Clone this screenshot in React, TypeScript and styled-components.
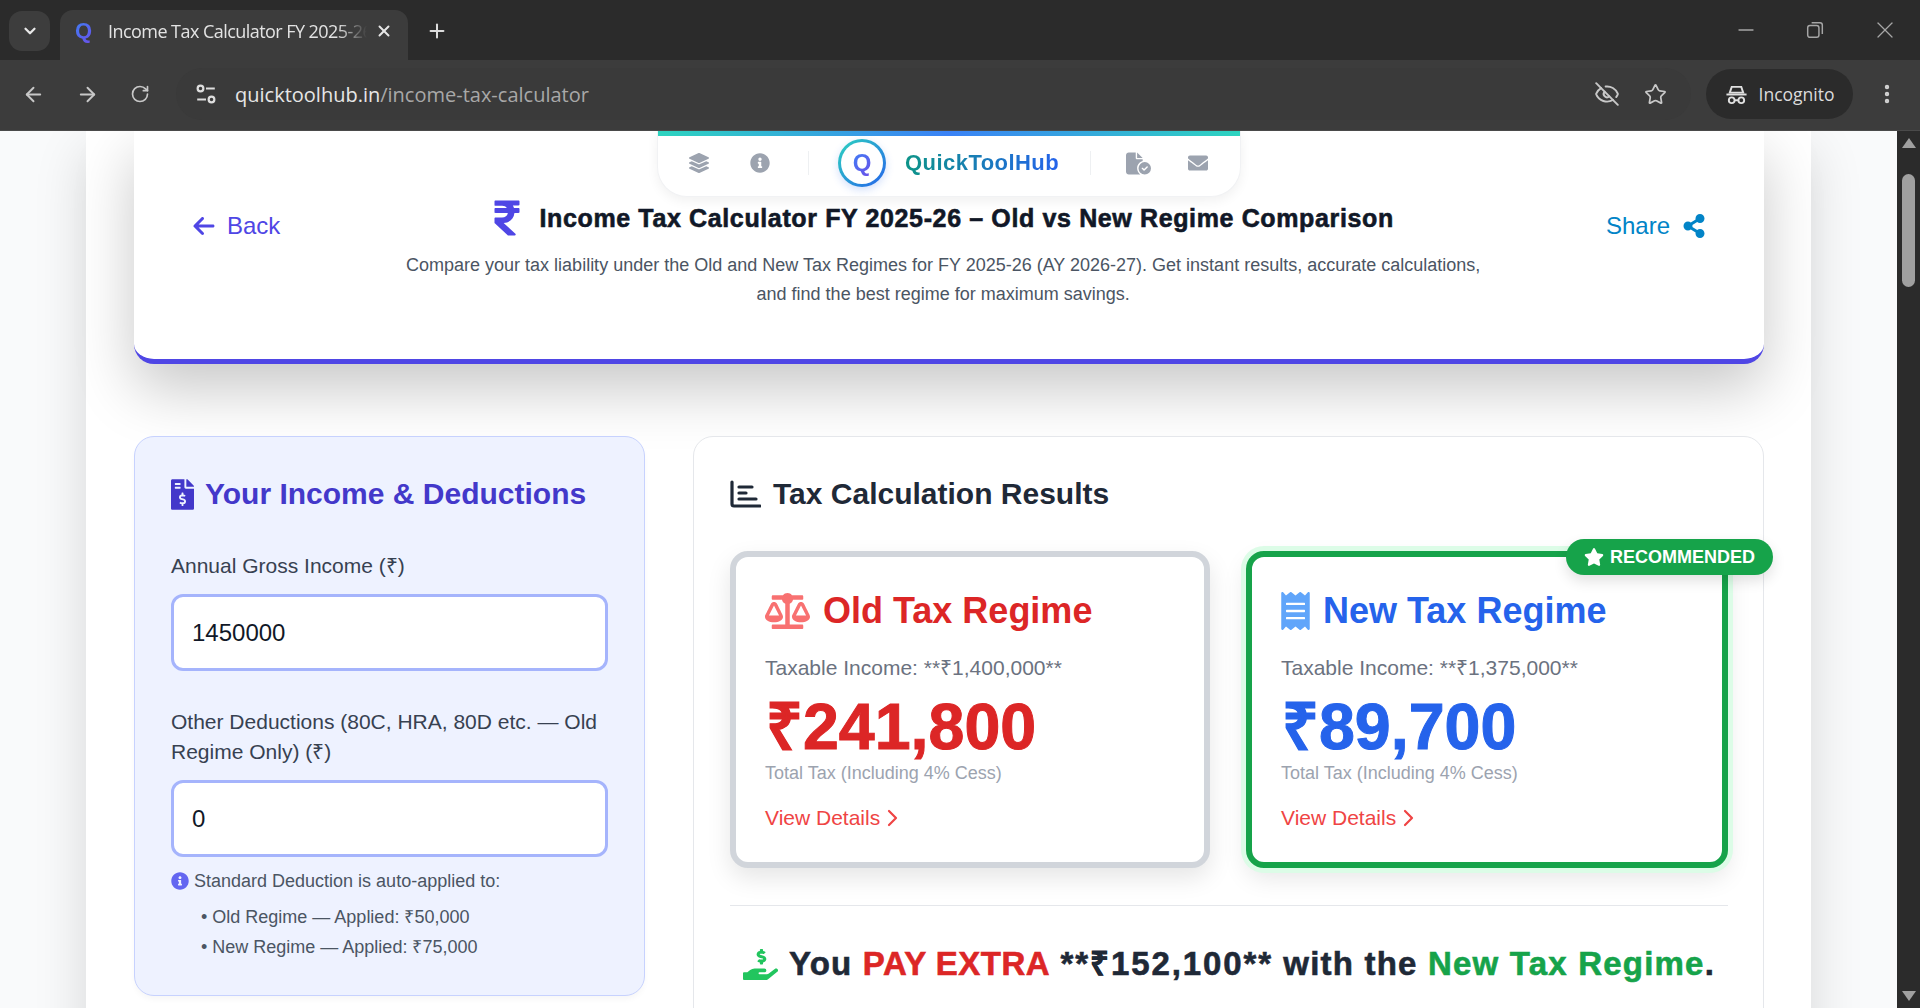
import styled, { createGlobalStyle } from 'styled-components';
import {
  FaBalanceScale,
  FaEnvelope,
  FaFileInvoiceDollar,
  FaHandHoldingUsd,
  FaInfoCircle,
  FaLayerGroup,
  FaReceipt,
  FaRupeeSign,
  FaShareAlt,
  FaStar,
} from 'react-icons/fa';
import { FaArrowLeft, FaFileCircleCheck } from 'react-icons/fa6';
import { ArrowLeft, ArrowRight, ChevronDown, EyeOff, Minus, MoreVertical, Plus, RotateCw, Star, X } from 'lucide-react';

const FONT = '"Liberation Sans", Arial, sans-serif';

const GlobalStyle = createGlobalStyle`
  html, body {
    margin: 0;
    height: 100%;
    overflow: hidden;
    background: #f9fafb;
    font-family: ${FONT};
  }
  * { box-sizing: border-box; }
`;

const Details = () => (
  <DetailsLink>
    View Details
    <DetailsChevron viewBox="0 0 11 18">
      <path d="M2 2l7 7-7 7" />
    </DetailsChevron>
  </DetailsLink>
);

const App = () => (
  <Screen>
    <GlobalStyle />
    <TitleBar>
      <TabListButton>
        <ChevronDown size={18} strokeWidth={3} />
      </TabListButton>
      <Tab>
        <Favicon>Q</Favicon>
        <TabTitle>Income Tax Calculator FY 2025-26</TabTitle>
        <X size={18} strokeWidth={2.6} color="#e6e6e6" />
      </Tab>
      <NewTab>
        <Plus size={22} strokeWidth={2.2} />
      </NewTab>
      <WindowButtons>
        <Minus size={24} strokeWidth={1.3} />
        <RestoreIcon viewBox="0 0 16 16">
          <rect x="1.5" y="4" width="10" height="10.5" rx="2" />
          <path d="M5 1.5h7.5a2 2 0 0 1 2 2v8" />
        </RestoreIcon>
        <X size={28} strokeWidth={1.1} />
      </WindowButtons>
    </TitleBar>

    <Toolbar>
      <NavIcons>
        <ArrowLeft size={23} strokeWidth={2} />
        <ArrowRight size={23} strokeWidth={2} />
        <RotateCw size={20} strokeWidth={2} />
      </NavIcons>
      <Omnibox>
        <TuneIcon viewBox="0 0 20 20">
          <circle cx="5" cy="5" r="2.6" />
          <path d="M10 5h8M2 15h8" />
          <circle cx="15" cy="15" r="2.6" />
        </TuneIcon>
        <Url>
          quicktoolhub.in<UrlPath>/income-tax-calculator</UrlPath>
        </Url>
        <OmniboxActions>
          <EyeOff size={26} strokeWidth={1.8} />
          <Star size={23} strokeWidth={1.8} />
        </OmniboxActions>
      </Omnibox>
      <IncognitoPill>
        <HatIcon viewBox="0 0 24 24">
          <path d="M7 4h10l2 6H5z" />
          <path d="M1.5 12h21" />
          <circle cx="7" cy="18" r="3" />
          <circle cx="17" cy="18" r="3" />
          <path d="M10 18h4" />
        </HatIcon>
        Incognito
      </IncognitoPill>
      <MoreVertical size={24} strokeWidth={2.4} />
    </Toolbar>

    <Viewport>
      <Page>
        <Container>
          <NavPill>
            <NavGlyph $gap={41}>
              <FaLayerGroup />
            </NavGlyph>
            <NavGlyph $gap={38}>
              <FaInfoCircle />
            </NavGlyph>
            <NavDivider $gap={29} />
            <LogoCircle>
              <LogoInner>
                <LogoQ>Q</LogoQ>
              </LogoInner>
            </LogoCircle>
            <LogoText>QuickToolHub</LogoText>
            <NavDivider $gap={35} />
            <NavGlyph $gap={37} $size={25}>
              <FaFileCircleCheck />
            </NavGlyph>
            <NavGlyph $gap={0}>
              <FaEnvelope />
            </NavGlyph>
          </NavPill>

          <HeaderCard>
            <BackLink>
              <FaArrowLeft size={24} />
              Back
            </BackLink>
            <HeaderCenter>
              <TitleRow>
                <RupeeBadge>
                  <FaRupeeSign />
                </RupeeBadge>
                <PageTitle>Income Tax Calculator FY 2025-26 – Old vs New Regime Comparison</PageTitle>
              </TitleRow>
              <Description>
                Compare your tax liability under the Old and New Tax Regimes for FY 2025-26 (AY 2026-27). Get instant
                results, accurate calculations, and find the best regime for maximum savings.
              </Description>
            </HeaderCenter>
            <ShareLink>
              Share
              <FaShareAlt size={24} />
            </ShareLink>
          </HeaderCard>

          <Columns>
            <InputPanel>
              <PanelTitle>
                <PanelIcon />
                Your Income &amp; Deductions
              </PanelTitle>
              <FieldLabel>Annual Gross Income (₹)</FieldLabel>
              <NumberInput readOnly value="1450000" />
              <FieldLabel $top={36}>Other Deductions (80C, HRA, 80D etc. — Old Regime Only) (₹)</FieldLabel>
              <NumberInput readOnly value="0" />
              <InfoLine>
                <FaInfoCircle size={18} color="#6366f1" />
                Standard Deduction is auto-applied to:
              </InfoLine>
              <InfoList>
                <li>• Old Regime — Applied: ₹50,000</li>
                <li>• New Regime — Applied: ₹75,000</li>
              </InfoList>
            </InputPanel>

            <ResultsPanel>
              <ResultsTitle>
                <ChartIcon viewBox="0 0 31 28">
                  <path d="M2 2v22a2 2 0 0 0 2 2h26" />
                  <path d="M9 7h13M9 13h7M9 19h17" />
                </ChartIcon>
                Tax Calculation Results
              </ResultsTitle>
              <CardGrid>
                <RegimeCard>
                  <RegimeTitle $color="#dc2626">
                    <RegimeIcon $color="#f87171" $w={45} $h={36}>
                      <FaBalanceScale />
                    </RegimeIcon>
                    Old Tax Regime
                  </RegimeTitle>
                  <Taxable>Taxable Income: **₹1,400,000**</Taxable>
                  <Amount $color="#dc2626">₹241,800</Amount>
                  <TotalNote>Total Tax (Including 4% Cess)</TotalNote>
                  <Details />
                </RegimeCard>
                <RegimeCard $recommended>
                  <Badge>
                    <FaStar size={20} />
                    RECOMMENDED
                  </Badge>
                  <RegimeTitle $color="#2563eb">
                    <RegimeIcon $color="#60a5fa" $w={29} $h={38}>
                      <FaReceipt />
                    </RegimeIcon>
                    New Tax Regime
                  </RegimeTitle>
                  <Taxable>Taxable Income: **₹1,375,000**</Taxable>
                  <Amount $color="#2563eb">₹89,700</Amount>
                  <TotalNote>Total Tax (Including 4% Cess)</TotalNote>
                  <Details />
                </RegimeCard>
              </CardGrid>
              <Divider />
              <Verdict>
                <FaHandHoldingUsd size={35} color="#22c55e" />
                <span>
                  You <Extra>PAY EXTRA</Extra> <Saved>**₹152,100**</Saved> with the <Better>New Tax Regime</Better>.
                </span>
              </Verdict>
            </ResultsPanel>
          </Columns>
        </Container>
      </Page>
      <Scrollbar>
        <ScrollArrow $dir="up" />
        <ScrollThumb />
        <ScrollArrow $dir="down" />
      </Scrollbar>
    </Viewport>
  </Screen>
);

export default App;

const Screen = styled.div`
  width: 1920px;
  height: 1008px;
  display: flex;
  flex-direction: column;
  overflow: hidden;
`;

const TitleBar = styled.div`
  height: 60px;
  flex: none;
  background: #2b2b2b;
  display: flex;
  align-items: flex-end;
  color: #d6d6d6;
  padding-left: 9px;
`;

const TabListButton = styled.div`
  width: 41px;
  height: 40px;
  margin: 0 10px 9px 0;
  border-radius: 13px;
  background: #3d3d3d;
  display: flex;
  align-items: center;
  justify-content: center;
  color: #e8e8e8;
`;

const Tab = styled.div`
  width: 348px;
  height: 50px;
  border-radius: 13px 13px 0 0;
  background: #3c3c3c;
  display: flex;
  align-items: center;
  padding: 0 15px 9px 15px;
`;

const Favicon = styled.span`
  width: 18px;
  font: 700 22px ${FONT};
  background: linear-gradient(135deg, #3b82f6, #6d4ee8);
  -webkit-background-clip: text;
  background-clip: text;
  color: transparent;
`;

const TabTitle = styled.span`
  flex: 1;
  margin-left: 15px;
  overflow: hidden;
  white-space: nowrap;
  font: 400 18px 'Open Sans', sans-serif;
  letter-spacing: -0.55px;
  color: #e3e3e3;
  -webkit-mask-image: linear-gradient(90deg, #000 86%, transparent 97%);
  mask-image: linear-gradient(90deg, #000 86%, transparent 97%);
`;

const NewTab = styled.div`
  margin: 0 0 12px 18px;
  width: 22px;
  height: 34px;
  display: flex;
  align-items: center;
  color: #dcdcdc;
`;

const WindowButtons = styled.div`
  margin-left: auto;
  margin-right: 21px;
  align-self: flex-start;
  margin-top: 16px;
  display: flex;
  align-items: center;
  gap: 47px;
  color: #a6a6a6;
`;

const RestoreIcon = styled.svg`
  width: 18px;
  height: 18px;
  margin-left: 1px;
  fill: none;
  stroke: currentColor;
  stroke-width: 1.3;
`;

const Toolbar = styled.div`
  height: 71px;
  flex: none;
  background: #3c3c3c;
  border-bottom: 1px solid #4a4a4a;
  display: flex;
  align-items: center;
  padding: 0 21px 2px 22px;
  color: #d2d2d2;
`;

const NavIcons = styled.div`
  width: 154px;
  display: flex;
  align-items: center;
  gap: 31px;
  color: #c8c8c8;
`;

const Omnibox = styled.div`
  width: 1515px;
  height: 52px;
  border-radius: 26px;
  padding: 0 24px 0 19px;
  display: flex;
  align-items: center;
  background: #3a3a3a;
`;

const TuneIcon = styled.svg`
  width: 22px;
  height: 22px;
  flex: none;
  fill: none;
  stroke: #dedede;
  stroke-width: 2;
`;

const Url = styled.div`
  margin-left: 18px;
  font: 400 20px 'Open Sans', sans-serif;
  color: #e6e6e6;
`;

const UrlPath = styled.span`
  color: #a8a8a8;
`;

const OmniboxActions = styled.div`
  margin-left: auto;
  display: flex;
  align-items: center;
  gap: 24px;
  color: #c8c8c8;
`;

const IncognitoPill = styled.div`
  width: 147px;
  height: 50px;
  margin-left: 15px;
  margin-right: 22px;
  border-radius: 25px;
  background: #2b2b2b;
  display: flex;
  align-items: center;
  justify-content: center;
  gap: 11px;
  font: 400 17.5px 'Open Sans', sans-serif;
  color: #dcdcdc;
`;

const HatIcon = styled.svg`
  width: 23px;
  height: 23px;
  fill: none;
  stroke: #e0e0e0;
  stroke-width: 2;
`;

const Viewport = styled.div`
  flex: 1;
  min-height: 0;
  display: flex;
`;

const Page = styled.main`
  flex: 1;
  min-width: 0;
  overflow: hidden;
  background: #f9fafb;
  padding: 0 86px;
`;

const Container = styled.div`
  position: relative;
  background: #fff;
  height: 1400px;
  padding: 0 47px 48px 48px;
  box-shadow: 0 20px 50px rgba(0, 0, 0, 0.14);
`;

const NavPill = styled.nav`
  position: absolute;
  top: 0;
  left: 571px;
  width: 584px;
  height: 66px;
  padding: 0 0 1px 31px;
  display: flex;
  align-items: center;
  background: #fff;
  border-radius: 0 0 30px 30px;
  border: 1px solid #f1f2f4;
  border-top: 0;
  box-shadow: 0 4px 12px rgba(0, 0, 0, 0.06);
  overflow: hidden;
  z-index: 2;
  &::before {
    content: '';
    position: absolute;
    top: 0;
    left: 0;
    right: 0;
    height: 5px;
    background: linear-gradient(90deg, #2dd4bf, #3b82f6, #2dd4bf);
  }
`;

const NavGlyph = styled.span<{ $gap: number; $size?: number }>`
  width: ${(p) => p.$size ?? 20}px;
  margin-right: ${(p) => p.$gap}px;
  display: flex;
  justify-content: center;
  font-size: ${(p) => p.$size ?? 20}px;
  color: #9ca3af;
`;

const NavDivider = styled.span<{ $gap: number }>`
  width: 1px;
  height: 24px;
  margin-right: ${(p) => p.$gap}px;
  background: #eef0f2;
`;

const LogoCircle = styled.div`
  width: 48px;
  height: 48px;
  flex: none;
  padding: 3px;
  border-radius: 50%;
  background: linear-gradient(135deg, #2dd4bf, #2563eb);
  box-shadow: 0 3px 8px rgba(37, 99, 235, 0.2);
`;

const LogoInner = styled.div`
  width: 100%;
  height: 100%;
  border-radius: 50%;
  background: #fff;
  display: flex;
  align-items: center;
  justify-content: center;
`;

const LogoQ = styled.span`
  font: 700 24px ${FONT};
  background: linear-gradient(135deg, #3b82f6, #6d4ee8);
  -webkit-background-clip: text;
  background-clip: text;
  color: transparent;
`;

const LogoText = styled.span`
  margin: 0 31px 0 19px;
  font: 700 22px ${FONT};
  letter-spacing: 0.45px;
  background: linear-gradient(90deg, #0d9488, #2563eb);
  -webkit-background-clip: text;
  background-clip: text;
  color: transparent;
`;

const HeaderCard = styled.header`
  display: flex;
  justify-content: space-between;
  align-items: flex-start;
  gap: 24px;
  padding: 69px 58px 50px 58px;
  border-radius: 0 0 20px 20px;
  border-bottom: 5px solid #4f46e5;
  background: #fff;
  box-shadow: 0 25px 60px rgba(0, 0, 0, 0.22);
`;

const BackLink = styled.a`
  margin-top: 11px;
  display: flex;
  align-items: center;
  gap: 11px;
  font-size: 24px;
  line-height: 30px;
  color: #4f46e5;
`;

const ShareLink = styled.a`
  margin-top: 11px;
  display: flex;
  align-items: center;
  gap: 12px;
  font-size: 24px;
  line-height: 30px;
  color: #0284c7;
`;

const HeaderCenter = styled.div`
  flex: 1;
  display: flex;
  flex-direction: column;
  align-items: center;
  text-align: center;
`;

const TitleRow = styled.div`
  display: flex;
  align-items: center;
  gap: 17px;
  height: 36px;
`;

const RupeeBadge = styled.span`
  display: flex;
  color: #4f46e5;
  svg {
    width: 30px;
    height: 40px;
  }
`;

const PageTitle = styled.h1`
  margin: 0;
  font: 700 25px/36px ${FONT};
  letter-spacing: 0.63px;
  color: #111827;
  -webkit-text-stroke: 0.6px #111827;
  white-space: nowrap;
`;

const Description = styled.p`
  margin: 15px 0 0;
  max-width: 1100px;
  font-size: 18px;
  line-height: 29px;
  color: #4b5563;
`;

const Columns = styled.div`
  margin-top: 72px;
  display: grid;
  grid-template-columns: 511px 1fr;
  gap: 48px;
  align-items: start;
`;

const InputPanel = styled.section`
  height: 560px;
  padding: 37px 36px 0;
  border: 1px solid #c7d2fe;
  border-radius: 20px;
  background: #eef2ff;
  box-shadow: 0 4px 6px -1px rgba(0, 0, 0, 0.04);
`;

const PanelTitle = styled.h2`
  margin: 0;
  display: flex;
  align-items: center;
  gap: 11px;
  font: 700 30px/40px ${FONT};
  color: #4338ca;
`;

const PanelIcon = styled(FaFileInvoiceDollar)`
  width: 23px;
  height: 31px;
`;

const FieldLabel = styled.label<{ $top?: number }>`
  display: block;
  margin-top: ${(p) => p.$top ?? 37}px;
  font-size: 21px;
  line-height: 30px;
  color: #374151;
`;

const NumberInput = styled.input`
  display: block;
  width: 100%;
  height: 77px;
  margin-top: 13px;
  padding: 0 18px;
  border: 3px solid #a5b4fc;
  border-radius: 12px;
  outline: none;
  background: #fff;
  font: 400 24px ${FONT};
  color: #111827;
`;

const InfoLine = styled.div`
  margin-top: 11px;
  display: flex;
  align-items: center;
  gap: 5px;
  font-size: 18px;
  line-height: 26px;
  color: #4b5563;
`;

const InfoList = styled.ul`
  list-style: none;
  margin: 8px 0 0;
  padding: 0 0 0 30px;
  font-size: 18px;
  line-height: 30px;
  color: #4b5563;
`;

const ResultsPanel = styled.section`
  height: 800px;
  padding: 37px 35px 36px 36px;
  border: 1px solid #e5e7eb;
  border-radius: 20px;
  background: #fff;
`;

const ResultsTitle = styled.h2`
  margin: 0;
  display: flex;
  align-items: center;
  gap: 12px;
  font: 700 30px/40px ${FONT};
  color: #1f2937;
`;

const ChartIcon = styled.svg`
  width: 31px;
  height: 28px;
  fill: none;
  stroke: #1f2937;
  stroke-width: 3.2;
  stroke-linecap: round;
`;

const CardGrid = styled.div`
  margin-top: 37px;
  display: grid;
  grid-template-columns: 480px 1fr;
  gap: 36px;
`;

const RegimeCard = styled.article<{ $recommended?: boolean }>`
  position: relative;
  height: 317px;
  padding: 32px 29px 0;
  border: 6px solid ${(p) => (p.$recommended ? '#16a34a' : '#d1d5db')};
  border-radius: 18px;
  background: #fff;
  box-shadow: ${(p) => (p.$recommended ? '0 0 0 5px #dcfce7,' : '')} 0 10px 25px rgba(0, 0, 0, 0.1);
`;

const Badge = styled.div`
  position: absolute;
  top: -18px;
  right: -51px;
  height: 36px;
  padding: 0 18px;
  display: flex;
  align-items: center;
  gap: 6px;
  border-radius: 18px;
  background: #16a34a;
  box-shadow: 0 6px 14px rgba(0, 0, 0, 0.12);
  font: 700 18px ${FONT};
  color: #fff;
`;

const RegimeTitle = styled.h3<{ $color: string }>`
  margin: 0;
  display: flex;
  align-items: center;
  gap: 13px;
  font: 700 36px/44px ${FONT};
  color: ${(p) => p.$color};
`;

const RegimeIcon = styled.span<{ $color: string; $w: number; $h: number }>`
  display: flex;
  color: ${(p) => p.$color};
  svg {
    width: ${(p) => p.$w}px;
    height: ${(p) => p.$h}px;
  }
`;

const Taxable = styled.p`
  margin: 20px 0 0;
  font-size: 21px;
  line-height: 30px;
  color: #6b7280;
`;

const Amount = styled.div<{ $color: string }>`
  margin-top: 12px;
  padding-left: 1px;
  font: 700 64.5px/64px ${FONT};
  color: ${(p) => p.$color};
  -webkit-text-stroke: 1px ${(p) => p.$color};
`;

const TotalNote = styled.div`
  margin-top: 1px;
  font-size: 18px;
  line-height: 26px;
  color: #9ca3af;
`;

const DetailsLink = styled.a`
  margin-top: 17px;
  display: flex;
  align-items: center;
  gap: 7px;
  font-size: 21px;
  line-height: 30px;
  color: #ef4444;
`;

const DetailsChevron = styled.svg`
  width: 11px;
  height: 18px;
  fill: none;
  stroke: currentColor;
  stroke-width: 2.2;
  stroke-linecap: round;
  stroke-linejoin: round;
`;

const Divider = styled.hr`
  margin: 37px 0 0;
  border: 0;
  border-top: 1px solid #e5e7eb;
`;

const Verdict = styled.div`
  margin-top: 38px;
  display: flex;
  align-items: center;
  justify-content: center;
  gap: 11px;
  font: 700 33px/40px ${FONT};
  letter-spacing: 1.2px;
  color: #1f2937;
  -webkit-text-stroke: 0.6px currentColor;
`;

const Extra = styled.span`
  letter-spacing: 0.5px;
  color: #dc2626;
`;

const Saved = styled.span`
  letter-spacing: 1.9px;
`;

const Better = styled.span`
  color: #16a34a;
`;

const Scrollbar = styled.aside`
  width: 23px;
  flex: none;
  background: #2b2b2b;
  display: flex;
  flex-direction: column;
  align-items: center;
  padding: 7px 0;
`;

const ScrollArrow = styled.span<{ $dir: 'up' | 'down' }>`
  width: 0;
  height: 0;
  border-left: 7px solid transparent;
  border-right: 7px solid transparent;
  ${(p) => (p.$dir === 'up' ? 'border-bottom: 10px solid #a0a0a0;' : 'border-top: 10px solid #a0a0a0; margin-top: auto;')}
`;

const ScrollThumb = styled.span`
  width: 13px;
  height: 113px;
  margin-top: 26px;
  border-radius: 7px;
  background: #a0a0a0;
`;
